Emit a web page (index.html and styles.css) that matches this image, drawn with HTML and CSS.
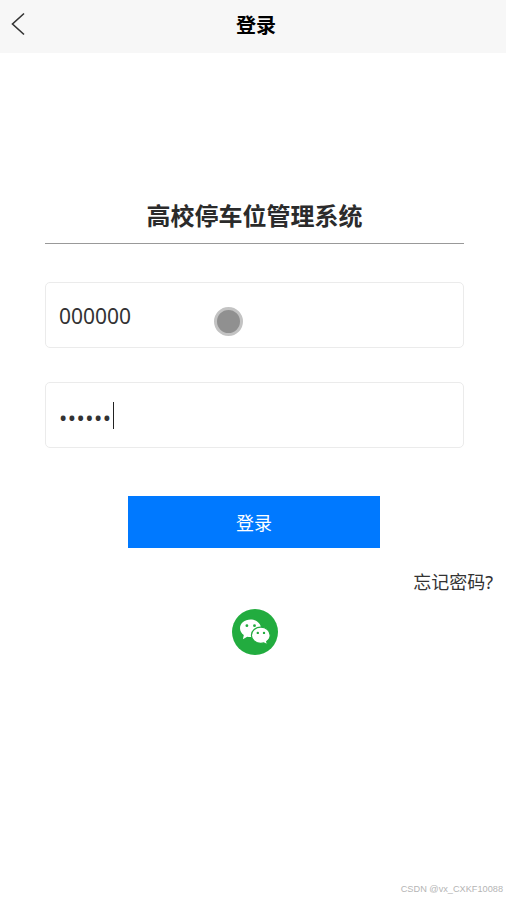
FILE: index.html
```
<!DOCTYPE html>
<html lang="zh-CN">
<head>
    <meta charset="UTF-8">
    <meta name="viewport" content="width=device-width, initial-scale=1.0">
    <title>登录</title>
    <link rel="stylesheet" href="styles.css">
</head>
<body>
    <header class="navbar">
        <a class="back" aria-label="返回">
            <svg width="14" height="24" viewBox="0 0 14 24">
                <path d="M13 1.5L1.5 12L13 22.5" fill="none" stroke="#333" stroke-width="1.6"/>
            </svg>
        </a>
        <h1>登录</h1>
    </header>

    <main class="container">
        <h2>高校停车位管理系统</h2>

        <div class="field">
            <span class="account">000000</span>
            <span class="touch"></span>
        </div>

        <div class="field">
            <span class="password">••••••</span>
            <span class="caret"></span>
        </div>

        <button class="login">登录</button>
    </main>

    <a class="forgot">忘记密码?</a>

    <a class="wechat" aria-label="微信登录">
        <svg width="46" height="46" viewBox="0 0 46 46">
            <circle cx="23" cy="23" r="23" fill="#22ac3f"/>
            <path d="M18.5 10.5C12.7 10.5 8 14.4 8 19.3c0 2.8 1.5 5.2 3.8 6.8l-.9 4.1 4.3-2.5c1 .3 2.1.4 3.3.4 5.8 0 10.5-3.9 10.5-8.8s-4.7-8.8-10.5-8.8z" fill="#fff"/>
            <path d="M28.8 18.1c-5.2 0-9.4 3.6-9.4 8.1s4.2 8.1 9.4 8.1c1 0 2-.1 2.9-.4l3.8 2-.8-3.4c2.1-1.5 3.5-3.8 3.5-6.3 0-4.5-4.2-8.1-9.4-8.1z" fill="#fff" stroke="#22ac3f" stroke-width="1.2"/>
            <g fill="#22ac3f">
                <circle cx="14.9" cy="16.7" r="1.4"/>
                <circle cx="22.5" cy="16.7" r="1.4"/>
                <circle cx="25.8" cy="23.9" r="1.2"/>
                <circle cx="32" cy="23.9" r="1.2"/>
            </g>
        </svg>
    </a>

    <footer class="credit">CSDN @vx_CXKF10088</footer>
</body>
</html>
```

FILE: styles.css
```
* {
    box-sizing: border-box;
}

body {
    font-family: "Noto Sans", "Noto Sans CJK SC", sans-serif;
    background-color: #fff;
    color: #333;
    margin: 0;
    height: 900px;
    display: flex;
    flex-direction: column;
    overflow: hidden;
}

.navbar {
    display: grid;
    grid-template-columns: 60px 1fr 60px;
    align-items: center;
    height: 53px;
    padding: 0 0 3px;
    background-color: #f7f7f7;
}

.back {
    display: flex;
    padding: 0 0 3px 11px;
}

h1 {
    margin: 2px 0 0 6px;
    font-size: 20px;
    line-height: 30px;
    text-align: center;
    color: #000;
}

.container {
    display: flex;
    flex-direction: column;
    margin: 145px 42px 0 45px;
}

h2 {
    margin: 0 0 38px;
    height: 46px;
    border-bottom: 1px solid #999;
    font-size: 24px;
    line-height: 36px;
    text-align: center;
    color: #2b2b2b;
}

.field {
    display: flex;
    align-items: center;
    position: relative;
    height: 66px;
    margin-bottom: 34px;
    padding: 0 13px;
    border: 1px solid #ebebeb;
    border-radius: 5px;
}

.account {
    padding-top: 2px;
    font-size: 21px;
    line-height: 30px;
}

.password {
    padding-top: 3px;
    font-size: 22px;
    line-height: 30px;
    letter-spacing: 0.5px;
}

.caret {
    width: 1px;
    height: 27px;
    margin-left: 1px;
    background-color: #222;
}

/* touch point shown over the account field */
.touch {
    position: absolute;
    left: 168px;
    top: 24px;
    width: 29px;
    height: 29px;
    border: 3px solid #c3c3c3;
    border-radius: 50%;
    background-color: #909090;
}

.login {
    width: 252px;
    height: 52px;
    margin: 14px 0 0 83px;
    padding: 0;
    border: none;
    background-color: #0079ff;
    color: #fff;
    font-family: inherit;
    font-size: 18px;
}

.forgot {
    align-self: flex-end;
    margin: 20px 13px 0 0;
    font-size: 18px;
    line-height: 28px;
}

.wechat {
    display: flex;
    justify-content: center;
    margin: 13px 0 0 4px;
}

.credit {
    margin: auto 3px 4px auto;
    font-family: "Liberation Sans", Arial, sans-serif;
    font-size: 9.2px;
    line-height: 14px;
    color: #b5b5b5;
}
```
